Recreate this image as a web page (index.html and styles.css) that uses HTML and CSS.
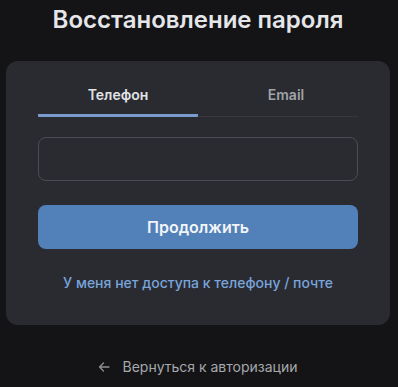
FILE: index.html
```html
<!DOCTYPE html>
<html lang="ru">
<head>
<meta charset="utf-8">
<link rel="stylesheet" href="styles.css">
</head>
<body>
<div class="page">
  <h1 class="title">Восстановление пароля</h1>
  <div class="card">
    <div class="tabs">
      <div class="tab tab-active"><span>Телефон</span></div>
      <div class="tab tab-email"><span>Email</span></div>
    </div>
    <div class="input"></div>
    <button class="btn">Продолжить</button>
    <a class="link">У меня нет доступа к телефону / почте</a>
  </div>
  <a class="back">
    <svg class="back-icon" width="12" height="12" viewBox="0 0 12 12" fill="none" stroke="currentColor" stroke-width="1.3" stroke-linecap="round" stroke-linejoin="round"><path d="M11 6H1.5M5.5 2L1.5 6l4 4"/></svg>
    <span>Вернуться к авторизации</span>
  </a>
</div>
</body>
</html>
```
FILE: styles.css
```css
* { box-sizing: border-box; }
html, body { margin: 0; padding: 0; }
body {
  background: #141416;
  font-family: Inter, "Noto Sans", sans-serif;
  color: #e1e3e6;
}
.page {
  width: 384px;
  margin-left: 6px;
  display: flex;
  flex-direction: column;
  align-items: stretch;
}
.title {
  margin: 5px 0 0;
  font-size: 24px;
  line-height: 30px;
  font-weight: 600;
  text-align: center;
  color: #e4e6e9;
}
.card {
  margin-top: 26px;
  background: #292b30;
  border-radius: 12px;
  padding: 12px 32px 32px;
  display: flex;
  flex-direction: column;
}
.tabs {
  display: flex;
  height: 44px;
  border-bottom: 1px solid #35383d;
}
.tab {
  flex: 1 1 0;
  display: flex;
  align-items: center;
  justify-content: center;
  font-size: 14px;
  font-weight: 600;
  color: #a0a3a8;
  margin-bottom: -1px;
  border-bottom: 3px solid transparent;
  padding-top: 1px;
}
.tab-email span { margin-left: 16px; }
.tab-active {
  color: #e1e3e6;
  border-bottom-color: #7a9ccc;
  border-radius: 0 0 1px 1px;
}
.input {
  margin-top: 20px;
  height: 44px;
  border: 1px solid #4a4d53;
  border-radius: 8px;
  background: #292b30;
}
.btn {
  margin-top: 24px;
  height: 44px;
  border: 0;
  border-radius: 8px;
  background: #5181b8;
  color: #f2f4f7;
  font-family: inherit;
  font-size: 16px;
  font-weight: 600;
}
.link {
  margin-top: 24px;
  line-height: 20px;
  text-align: center;
  font-size: 14px;
  font-weight: 500;
  color: #79a4dc;
}
.back {
  margin-top: 32px;
  display: flex;
  align-items: center;
  justify-content: center;
  gap: 12px;
  line-height: 20px;
  font-size: 14px;
  color: #a5a8ad;
}
.back-icon { color: #8c8f94; }
```
